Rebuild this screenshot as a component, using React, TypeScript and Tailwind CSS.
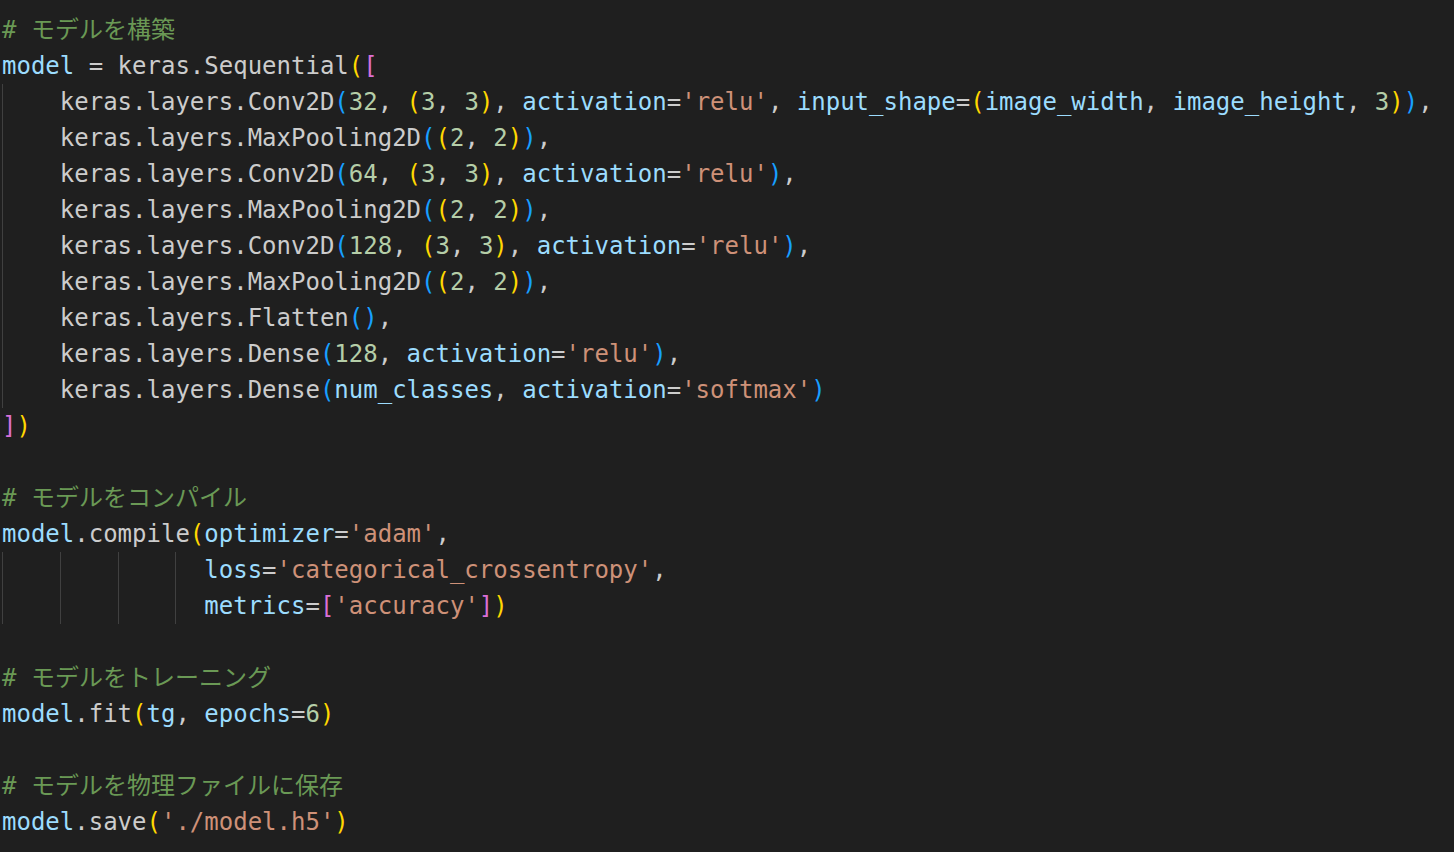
type Kind = "p" | "v" | "s" | "n" | "c" | "b1" | "b2" | "b3";

type Tok = [Kind, string];

// colour for each token kind (VS Code dark theme)
const colors: Record<Kind, string> = {
  p: "text-[#cccccc]",
  v: "text-[#9cdcfe]",
  s: "text-[#ce9178]",
  n: "text-[#b5cea8]",
  c: "text-[#6a9955]",
  b1: "text-[#ffd700]",
  b2: "text-[#da70d6]",
  b3: "text-[#179fff]",
};

interface Line {
  guides?: number; // number of indent guides (4 columns each)
  half?: boolean; // one more guide that is only 2 columns wide
  toks: Tok[];
}

const tuple = (a: string, b: string): Tok[] => [
  ["b1", "("],
  ["n", a],
  ["p", ", "],
  ["n", b],
  ["b1", ")"],
];

const lines: Line[] = [
  { toks: [["c", "# モデルを構築"]] },
  { toks: [["v", "model"], ["p", " = keras.Sequential"], ["b1", "("], ["b2", "["]] },
  {
    guides: 1,
    toks: [
      ["p", "keras.layers.Conv2D"], ["b3", "("], ["n", "32"], ["p", ", "],
      ...tuple("3", "3"), ["p", ", "],
      ["v", "activation"], ["p", "="], ["s", "'relu'"], ["p", ", "],
      ["v", "input_shape"], ["p", "="], ["b1", "("], ["v", "image_width"], ["p", ", "],
      ["v", "image_height"], ["p", ", "], ["n", "3"], ["b1", ")"], ["b3", ")"], ["p", ","],
    ],
  },
  { guides: 1, toks: [["p", "keras.layers.MaxPooling2D"], ["b3", "("], ...tuple("2", "2"), ["b3", ")"], ["p", ","]] },
  {
    guides: 1,
    toks: [
      ["p", "keras.layers.Conv2D"], ["b3", "("], ["n", "64"], ["p", ", "], ...tuple("3", "3"), ["p", ", "],
      ["v", "activation"], ["p", "="], ["s", "'relu'"], ["b3", ")"], ["p", ","],
    ],
  },
  { guides: 1, toks: [["p", "keras.layers.MaxPooling2D"], ["b3", "("], ...tuple("2", "2"), ["b3", ")"], ["p", ","]] },
  {
    guides: 1,
    toks: [
      ["p", "keras.layers.Conv2D"], ["b3", "("], ["n", "128"], ["p", ", "], ...tuple("3", "3"), ["p", ", "],
      ["v", "activation"], ["p", "="], ["s", "'relu'"], ["b3", ")"], ["p", ","],
    ],
  },
  { guides: 1, toks: [["p", "keras.layers.MaxPooling2D"], ["b3", "("], ...tuple("2", "2"), ["b3", ")"], ["p", ","]] },
  { guides: 1, toks: [["p", "keras.layers.Flatten"], ["b3", "()"], ["p", ","]] },
  {
    guides: 1,
    toks: [
      ["p", "keras.layers.Dense"], ["b3", "("], ["n", "128"], ["p", ", "],
      ["v", "activation"], ["p", "="], ["s", "'relu'"], ["b3", ")"], ["p", ","],
    ],
  },
  {
    guides: 1,
    toks: [
      ["p", "keras.layers.Dense"], ["b3", "("], ["v", "num_classes"], ["p", ", "],
      ["v", "activation"], ["p", "="], ["s", "'softmax'"], ["b3", ")"],
    ],
  },
  { toks: [["b2", "]"], ["b1", ")"]] },
  { toks: [] },
  { toks: [["c", "# モデルをコンパイル"]] },
  {
    toks: [
      ["v", "model"], ["p", ".compile"], ["b1", "("], ["v", "optimizer"], ["p", "="],
      ["s", "'adam'"], ["p", ","],
    ],
  },
  { guides: 3, half: true, toks: [["v", "loss"], ["p", "="], ["s", "'categorical_crossentropy'"], ["p", ","]] },
  {
    guides: 3,
    half: true,
    toks: [["v", "metrics"], ["p", "="], ["b2", "["], ["s", "'accuracy'"], ["b2", "]"], ["b1", ")"]],
  },
  { toks: [] },
  { toks: [["c", "# モデルをトレーニング"]] },
  {
    toks: [
      ["v", "model"], ["p", ".fit"], ["b1", "("], ["v", "tg"], ["p", ", "], ["v", "epochs"],
      ["p", "="], ["n", "6"], ["b1", ")"],
    ],
  },
  { toks: [] },
  { toks: [["c", "# モデルを物理ファイルに保存"]] },
  { toks: [["v", "model"], ["p", ".save"], ["b1", "("], ["s", "'./model.h5'"], ["b1", ")"]] },
];

function CodeLine({ line }: { line: Line }) {
  const guides = line.guides ?? 0;
  return (
    <div className="flex h-[36px] items-stretch leading-[36px] whitespace-pre">
      {Array.from({ length: guides }).map((_, i) => (
        <div key={i} className="w-[4ch] shrink-0 border-l border-[#404040]" />
      ))}
      {line.half && <div className="w-[2ch] shrink-0 border-l border-[#404040]" />}
      <div>
        {line.toks.map((t, i) => (
          <span key={i} className={colors[t[0]]}>
            {t[1]}
          </span>
        ))}
        {line.toks.length === 0 ? " " : null}
      </div>
    </div>
  );
}

export default function App() {
  return (
    <div className="h-[852px] w-[1454px] overflow-hidden bg-[#1f1f1f] pt-[12px] pl-[2px] font-['DejaVu_Sans_Mono','Noto_Sans_CJK_JP',monospace] text-[24px] text-[#cccccc]">
      {lines.map((line, i) => (
        <CodeLine key={i} line={line} />
      ))}
    </div>
  );
}
